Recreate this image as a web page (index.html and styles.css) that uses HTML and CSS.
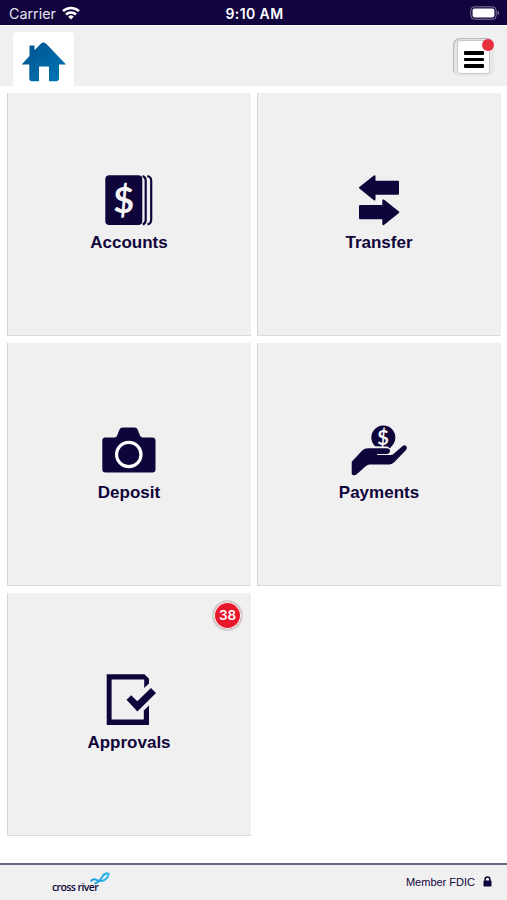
FILE: index.html
```html
<!DOCTYPE html>
<html lang="en">
<head>
    <meta charset="UTF-8">
    <meta name="viewport" content="width=device-width, initial-scale=1.0">
    <title>Cross River</title>
    <link rel="stylesheet" href="styles.css">
</head>
<body>
    <div class="app">
        <div class="status-bar">
            <div class="carrier">
                <span>Carrier</span>
                <svg class="wifi" viewBox="0 0 18 14" fill="none" stroke="#fff" stroke-width="2.5">
                    <path d="M1 5.2a11.5 11.5 0 0 1 16 0M4 8.5a7.2 7.2 0 0 1 10 0"/>
                    <path d="M9 13.6l-2.8-2.9a4 4 0 0 1 5.6 0z" fill="#fff" stroke="none"/>
                </svg>
            </div>
            <div class="time">9:10 AM</div>
            <svg class="battery" viewBox="0 0 30 14">
                <rect x=".8" y=".8" width="25.4" height="12.4" rx="3.6" fill="none" stroke="#817b9e"/>
                <rect x="2.6" y="2.6" width="21.8" height="8.8" rx="2" fill="#fff"/>
                <path d="M27.6 4.8c2 .7 2 3.7 0 4.4z" fill="#817b9e"/>
            </svg>
        </div>

        <header class="header">
            <a class="home-tab">
                <svg class="home-icon" viewBox="0 0 46 40">
                    <defs>
                        <linearGradient id="homeFill" x1="0" y1="0" x2="1" y2="1">
                            <stop offset="0" stop-color="#00518b"/>
                            <stop offset="1" stop-color="#0077b8"/>
                        </linearGradient>
                    </defs>
                    <path d="M8.5 3.5h5v4.8l6.3-6.6Q22.5-.8 25.2 1.7L45 22.5H38V36.5Q38 39.3 35 39.3H28V24.5H18V39.3H11Q8.3 39.3 8.3 36.5V22.5H.7L8.5 14z" fill="url(#homeFill)"/>
                </svg>
            </a>
            <div class="menu-button">
                <div class="menu-face">
                    <span></span>
                    <span></span>
                    <span></span>
                </div>
                <div class="menu-dot"></div>
            </div>
        </header>

        <main class="tiles">
            <div class="tile">
                <svg class="tile-icon" viewBox="0 0 60 60">
                    <rect x="6.3" y="5.3" width="37" height="49.7" rx="4"/>
                    <path class="pages" d="M43.500 6q3.200.8 3.200 4.500v39.500q0 3.500-3 4.500M48.300 6q3.900.8 3.900 4.500v39q0 4-3.700 5"/>
                    <text x="24.800" y="43.300" class="dollar">$</text>
                </svg>
                <div class="label">Accounts</div>
            </div>
            <div class="tile">
                <svg class="tile-icon" viewBox="0 0 60 60">
                    <path class="rounded" d="M11 17.700L25.500 6.200V11.700H49V23.700H25.500V29.500zM49.300 42.300L34.300 54.200V48.300H11V36H34.300V30.400z"/>
                </svg>
                <div class="label">Transfer</div>
            </div>
            <div class="tile">
                <svg class="tile-icon" viewBox="0 0 60 60">
                    <path d="M6.300 17.500H15.500Q17.500 17.500 18.200 15.500L20.500 9.500Q21.300 7.500 23.500 7.500H35.500Q37.800 7.500 38.600 9.500L41 15.500Q41.800 17.500 43.800 17.500H53.300Q56.500 17.500 56.500 20.500V49.500Q56.500 52.500 53.500 52.500H6.500Q3.300 52.500 3.300 49.500V20.500Q3.300 17.500 6.300 17.500z"/>
                    <circle cx="29.800" cy="34.500" r="12.200" class="lens"/>
                </svg>
                <div class="label">Deposit</div>
            </div>
            <div class="tile">
                <svg class="tile-icon" viewBox="0 0 60 60">
                    <path d="M26 26.200A12 12 0 1 1 43 25.800L41 28.200L38.500 26.500z"/>
                    <text x="34" y="24.500" class="coin">$</text>
                    <path d="M2.700 41.700L13.200 30.500Q15.500 28.300 19 28.300H37.500Q41 28.300 41 31T37.500 34H28V35H41.500Q43.500 35 45 33.400L53.300 26.200Q55.300 24.500 57 25.900T57 30L45.200 42.300Q43.200 44.400 40.500 44.400H20.500Q18.500 44.400 17 45.900L7.700 54.300Q6 55.800 4 55.200L2.700 54z"/>
                </svg>
                <div class="label">Payments</div>
            </div>
            <div class="tile">
                <svg class="tile-icon" viewBox="0 0 60 60">
                    <path d="M7.700 4.300H45.500L50 8.800V13.500L45.200 18V9.500H12.600V49.500H44.800V40.500L50 35.600V54.900H7.700z"/>
                    <path d="M27.500 29.800L32.200 25.200L38.300 31.200L52 18L57 22.900L38.400 41.400z"/>
                </svg>
                <div class="label">Approvals</div>
                <div class="badge">38</div>
            </div>
        </main>

        <footer class="footer">
            <div class="logo">
                <span>cross river</span>
                <svg class="logo-wave" viewBox="0 0 20 13" fill="none">
                    <defs>
                        <linearGradient id="waveFill">
                            <stop offset="0" stop-color="#1499d8"/>
                            <stop offset="1" stop-color="#35b9f2"/>
                        </linearGradient>
                    </defs>
                    <path d="M4.500 11.600C9 10.500 10.500 7.500 12.500 4.500C14 2 16 1 18.500 1.500" stroke="url(#waveFill)" stroke-width="2"/>
                    <path d="M1 9.500C1.500 6.800 4.500 7 7.500 8.300C12 10.200 18.500 7.500 18.700 1" stroke="url(#waveFill)" stroke-width="2"/>
                </svg>
            </div>
            <div class="member">
                <span>Member FDIC</span>
                <svg class="lock" viewBox="0 0 9 11">
                    <path d="M2.100 5V3.300a2.400 2.400 0 0 1 4.800 0V5" fill="none" stroke="#10053b" stroke-width="1.500"/>
                    <rect x=".5" y="4.600" width="8" height="6" rx=".8" fill="#10053b"/>
                </svg>
            </div>
        </footer>
    </div>
</body>
</html>
```
FILE: styles.css
```css
* {
    box-sizing: border-box;
}
body {
    margin: 0;
    font-family: "Liberation Sans", Arial, sans-serif;
    background-color: #fff;
    color: #10053b;
}
.app {
    display: flex;
    flex-direction: column;
    height: 900px;
    overflow: hidden;
}
.status-bar {
    display: grid;
    grid-template-columns: 1fr auto 1fr;
    align-items: center;
    height: 25px;
    padding: 2px 7px 0 9px;
    background-color: #12043e;
    color: #fff;
    font-family: Inter, sans-serif;
}
.carrier {
    display: flex;
    align-items: center;
    gap: 6px;
    color: #e5e2ef;
    font-size: 14.3px;
}
.wifi {
    width: 18px;
    height: 14px;
    margin-top: -2px;
}
.time {
    font-weight: 600;
    font-size: 14px;
    letter-spacing: 0.4px;
}
.battery {
    justify-self: end;
    width: 30px;
    height: 14px;
    margin-top: -2px;
}
.header {
    display: flex;
    justify-content: space-between;
    height: 61px;
    padding: 6px 13px 0;
    background-color: #f0f0f0;
    border-top: 1px solid #fff;
}
.home-tab {
    width: 61px;
    height: 54px;
    padding: 10px 0 0 8px;
    background-color: #fff;
    border-radius: 4px 4px 0 0;
}
.home-icon {
    display: block;
    width: 46px;
    height: 40px;
}
.menu-button {
    position: relative;
    width: 41px;
    height: 38px;
    margin-top: 6px;
    padding: 2px 4px;
    background-color: #e7e7e7;
    border-radius: 7px;
    box-shadow: inset 1px 1px 1px #b5b5b5;
}
.menu-face {
    display: flex;
    flex-direction: column;
    justify-content: center;
    align-items: center;
    gap: 3px;
    width: 33px;
    height: 34px;
    padding-top: 5px;
    background-color: #fff;
    border: 1px solid #c9c9c9;
    border-radius: 4px;
}
.menu-face span {
    width: 20px;
    height: 3.5px;
    background-color: #000;
    border-radius: 1px;
}
.menu-dot {
    position: absolute;
    top: 1px;
    right: 0;
    width: 12px;
    height: 12px;
    background-color: #e72f40;
    border-radius: 50%;
}
.tiles {
    flex: 1;
    display: grid;
    grid-template-columns: 244px 244px;
    grid-auto-rows: 243px;
    gap: 7px 6px;
    padding: 7px 0 0 7px;
}
.tile {
    position: relative;
    display: flex;
    flex-direction: column;
    align-items: center;
    padding: 77px 1px 0 0;
    background-color: #f0f0f0;
    border-left: 1px solid #d5d5d5;
    border-bottom: 1px solid #dadada;
}
.tile-icon {
    width: 60px;
    height: 60px;
    fill: #10053b;
}
.tile-icon .pages {
    fill: none;
    stroke: #10053b;
    stroke-width: 2.2;
}
.tile-icon .rounded {
    stroke: #10053b;
    stroke-width: 2;
    stroke-linejoin: round;
}
.tile-icon .lens {
    fill: none;
    stroke: #fff;
    stroke-width: 3.2;
}
.tile-icon text {
    fill: #f4f4f4;
    text-anchor: middle;
    font-family: Lato, sans-serif;
    font-weight: bold;
}
.tile-icon .dollar {
    font-size: 36px;
}
.tile-icon .coin {
    font-size: 20px;
}
.label {
    margin-top: 3px;
    font-size: 17px;
    font-weight: bold;
    line-height: 20px;
}
.badge {
    position: absolute;
    top: 7px;
    right: 8px;
    width: 31px;
    height: 31px;
    background-color: #e8172b;
    border: 2px solid #d2d2d2;
    border-radius: 50%;
    box-shadow: inset 0 0 0 1px #fff;
    color: #fff;
    font-family: Inter, sans-serif;
    font-size: 13.5px;
    font-weight: 600;
    line-height: 27px;
    text-align: center;
}
.footer {
    display: flex;
    justify-content: space-between;
    height: 37px;
    padding: 0 15px 2px 52px;
    background-color: #f0f0f0;
    border-top: 2px solid #69678c;
}
.logo {
    position: relative;
    padding-top: 14px;
    font-family: "Open Sans", sans-serif;
    font-size: 10.5px;
    font-weight: 600;
    letter-spacing: -0.6px;
    line-height: 16px;
}
.logo-wave {
    position: absolute;
    top: 7px;
    left: 38px;
    width: 20px;
    height: 13px;
}
.member {
    display: flex;
    align-items: center;
    gap: 8px;
    font-size: 11px;
}
.lock {
    width: 9px;
    height: 11px;
}
```
